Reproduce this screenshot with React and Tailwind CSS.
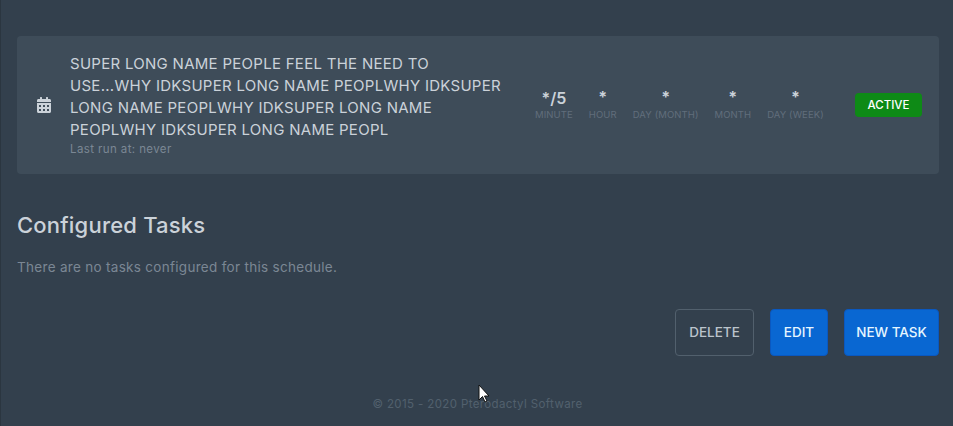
import { FaCalendarAlt } from "react-icons/fa";

const schedule = [
  { value: "*/5", label: "MINUTE", big: true },
  { value: "*", label: "HOUR" },
  { value: "*", label: "DAY (MONTH)" },
  { value: "*", label: "MONTH" },
  { value: "*", label: "DAY (WEEK)" },
];

function Cron({ value, label, big }) {
  return (
    <div className="flex flex-col items-center">
      <p className={big ? "h-[21px] text-[16px] leading-[22px] font-semibold text-[#cbd2d9]" : "h-[21px] text-[16px] leading-[20px] font-bold text-[#cbd2d9]"}>
        {value}
      </p>
      <p className="text-[9.5px] leading-[14px] tracking-[0.1px] text-[#616e7c]">{label}</p>
    </div>
  );
}

export default function App() {
  return (
    <div className="relative h-[426px] w-[953px] overflow-hidden border-l border-[#2b3640] bg-[#33404d] font-['Inter',sans-serif]">
      <div className="pl-4 pr-[14px] pt-9">
        <div className="flex h-[138px] items-center rounded bg-[#3e4c59] pl-[20px] pr-[17px]">
          <FaCalendarAlt className="h-4 w-[14px] shrink-0 text-[#cbd2d9]" />
          <div className="ml-[19px] w-[436px] shrink-0">
            <p className="text-[15px] leading-[22px] tracking-[0.28px] text-[#cbd2d9]">
              SUPER LONG NAME PEOPLE FEEL THE NEED TO USE...WHY IDKSUPER LONG NAME PEOPLWHY IDKSUPER LONG NAME PEOPLWHY IDKSUPER LONG NAME PEOPLWHY IDKSUPER LONG NAME PEOPL
            </p>
            <p className="text-[11.5px] leading-[16px] tracking-[0.4px] text-[#7b8794]">Last run at: never</p>
          </div>
          <div className="mb-0.5 ml-[29px] flex gap-4">
            {schedule.map((item) => (
              <Cron key={item.label} {...item} />
            ))}
          </div>
          <span className="ml-auto flex h-6 w-[67px] items-center justify-center rounded bg-[#0e8a16] pt-px text-[11.5px] font-medium text-white">
            ACTIVE
          </span>
        </div>

        <h2 className="mt-[37px] text-[22px] leading-[28px] font-medium tracking-[0.2px] text-[#cbd2d9]">
          Configured Tasks
        </h2>
        <p className="mt-[18px] text-[13.5px] leading-[20px] tracking-[0.3px] text-[#7b8794]">
          There are no tasks configured for this schedule.
        </p>

        <div className="mt-[32px] flex justify-end gap-4">
          <button className="h-[47px] w-[79px] rounded border border-[#52606d] text-[13.5px] font-medium text-[#bcc4cc]">
            DELETE
          </button>
          <button className="h-[47px] w-[58px] rounded border border-[#0a58c0] bg-[#0967d2] text-[13.5px] font-medium text-[#e6f6ff]">
            EDIT
          </button>
          <button className="h-[47px] w-[95px] rounded border border-[#0a58c0] bg-[#0967d2] text-[13.5px] font-medium text-[#e6f6ff]">
            NEW TASK
          </button>
        </div>

        <p className="mt-[40px] ml-[-1px] text-center text-[11.5px] leading-[16px] tracking-[0.38px] text-[#52606d]">
          © 2015 - 2020 Pterodactyl Software
        </p>
      </div>

      {/* mouse pointer caught in the screenshot */}
      <svg className="absolute top-[384px] left-[477px]" width="12" height="19" viewBox="0 0 12 19">
        <path d="M1 1v15l3.5-3.5 2.5 5.5 2-1-2.5-5H11z" fill="#fff" stroke="#111" strokeWidth="1" />
      </svg>
    </div>
  );
}
